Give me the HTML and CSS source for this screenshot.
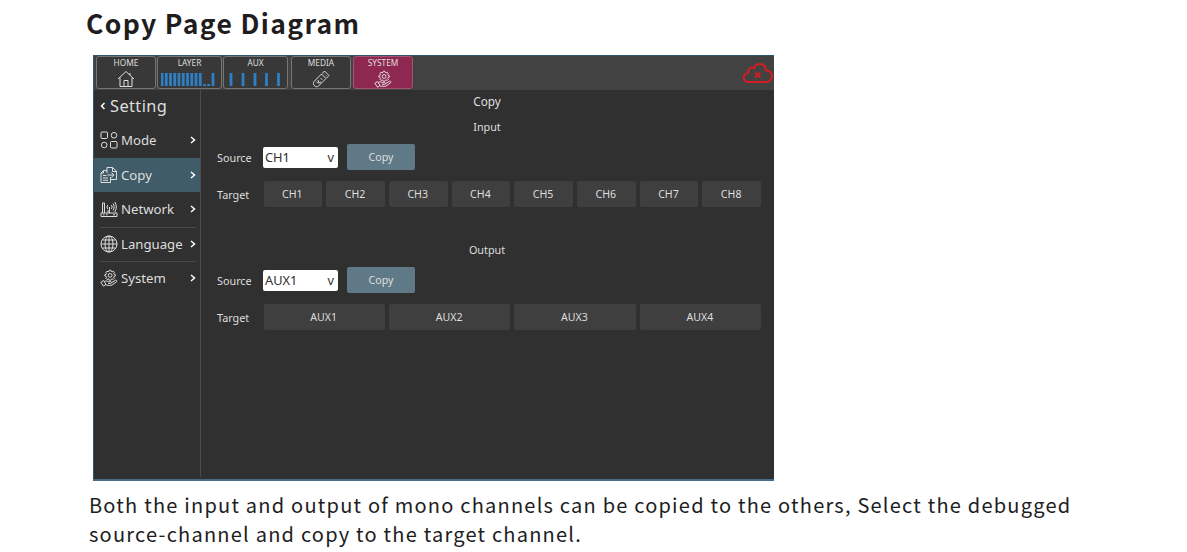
FILE: index.html
```html
<!DOCTYPE html>
<html lang="en">
  <head>
    <meta charset="UTF-8" />
    <meta name="viewport" content="width=device-width, initial-scale=1.0" />
    <title>Copy Page Diagram</title>
    <link rel="stylesheet" href="styles.css">
  </head>
  <body>
    <!-- shared icon -->
    <svg class="defs" width="0" height="0">
      <symbol id="gear-hand" viewBox="0 0 18 18">
        <path d="M9.300 1.200h1.600l.3 1.200 1 .4 1-.6 1.100 1.100-.6 1 .4 1 1.200.3v1.500l-1.200.3-.4 1 .6 1-1.100 1.100-1-.6-1 .4-.3 1H9.300L9 10.300l-1-.4-1 .6-1.100-1.100.6-1-.4-1-1.200-.3V5.600l1.200-.3.4-1-.6-1L7 2.200l1 .6 1-.4z" />
        <circle cx="10.100" cy="6.400" r="1.900" />
        <path d="M.8 13.300l2.700-1.800 2.500 3.800-2.500 1.900zM4.200 12.500c1.300-.8 2.800-.7 4 .2h2.600c1.100.1 1.100 1.500 0 1.700H8M11.700 13.600l3.700-2.300c1.300-.5 2 .7 1.100 1.500l-4.400 3.200c-1.600.8-4 .3-6.200 0" />
      </symbol>
    </svg>

    <h1>Copy Page Diagram</h1>

    <div class="app">
      <header class="topbar">
        <div class="tab home">
          <span>HOME</span>
          <svg class="tab-icon" width="18" height="18" viewBox="0 0 18 18"><path d="M1 9l8-7.500L17 9M3 7.500V16.500h12V7.500M7 16.500v-6h4v6M13 3v2" /></svg>
        </div>
        <div class="tab layer">
          <span>LAYER</span>
          <svg class="bars" width="58" height="13" viewBox="0 0 58 13">
            <path d="M1 0v13M5.250 0v13M9.500 0v13M13.750 0v13M18 0v13M22.250 0v13M26.500 0v13M30.750 0v13M35 0v13M39.250 0v13M43.500 11v2M47.700 11v2M52 0v13" />
          </svg>
        </div>
        <div class="tab aux">
          <span>AUX</span>
          <svg class="bars" width="58" height="13" viewBox="0 0 58 13">
            <path d="M4 0v13M16 0v13M28 0v13M39.500 0v13M51.500 0v13" />
          </svg>
        </div>
        <div class="tab media">
          <span>MEDIA</span>
          <svg class="tab-icon" width="18" height="18" viewBox="0 0 18 18"><path d="M2 11.500l7.500-7.500 4.500 4.500-7.500 7.500c-1.500 1.300-3 .8-4-.2-1.200-1.200-1.600-3-.5-4.300zM10 3.500l2.500-2.500L17 5.500 14.500 8M12.300 3.600l.5.5M14 5.300l.5.5M4.300 11.600l1.800 1.800M6 10l1 3 2-1M8.500 8l1.800 1.800" /></svg>
        </div>
        <div class="tab system active">
          <span>SYSTEM</span>
          <svg class="tab-icon" width="18" height="18"><use href="#gear-hand" /></svg>
        </div>
        <svg class="cloud" width="31" height="22" viewBox="0 0 31 22">
          <path d="M7 20C.8 20-.5 12.500 6 11c-.3-4.500 3.500-6.500 6.300-5C14.500.5 23 .3 24.200 8.500c5.500.5 7.500 5.500 4.500 9.500-1.200 1.700-2.700 2-4.700 2z" />
          <path class="cross" d="M13.200 10.500l5 5M18.200 10.500l-5 5" />
        </svg>
      </header>

      <div class="body">
        <nav class="sidebar">
          <div class="title">
            <svg width="6" height="8" viewBox="0 0 6 8"><path d="M4.500 1L1.500 4l3 3" /></svg>
            <span>Setting</span>
          </div>
          <div class="item">
            <svg class="icon" width="18" height="18" viewBox="0 0 18 18"><rect x="1" y="1" width="6.500" height="6.500" rx="1" /><circle cx="14" cy="4.300" r="2.800" /><circle cx="4.200" cy="14" r="2.800" /><rect x="10.500" y="10.500" width="6.500" height="6.500" rx="1" /></svg>
            <span>Mode</span>
            <svg class="arrow" width="6" height="8" viewBox="0 0 6 8"><path d="M1 1l3.500 3L1 7" /></svg>
          </div>
          <div class="item active">
            <svg class="icon" width="18" height="18" viewBox="0 0 18 18"><path d="M7 4.500H3.500L1 7v9.500h9.500v-3M7 7V1.500h5.500L16.500 5v8.500H10.500V11M12.500 1.500V5.500h4M1 7h2.500V4.500M3 9.500h3.500M3 12h5M3 14.300h5M7.500 9h6M11.500 6.800L14 9l-2.500 2.200" /></svg>
            <span>Copy</span>
            <svg class="arrow" width="6" height="8" viewBox="0 0 6 8"><path d="M1 1l3.500 3L1 7" /></svg>
          </div>
          <div class="item">
            <svg class="icon" width="18" height="18" viewBox="0 0 18 18"><path d="M1 13h16v3.500H1zM3 14.800h1.500M6 14.800h1.500M13 14.800h2M2.500 3v10M4.500 3v10M2.500 3h2M9.500 13V7M8 13v-3M11.300 5c1 1.200 1 2.800 0 4M13 3.500c1.500 2.200 1.500 4.800 0 7M14.800 2c2 3 2 7 0 10M7.800 5c-1 1.200-1 2.800 0 4" /></svg>
            <span>Network</span>
            <svg class="arrow" width="6" height="8" viewBox="0 0 6 8"><path d="M1 1l3.500 3L1 7" /></svg>
          </div>
          <div class="item">
            <svg class="icon" width="18" height="18" viewBox="0 0 18 18"><circle cx="9" cy="9" r="8" /><ellipse cx="9" cy="9" rx="4" ry="8" /><path d="M9 1v16M1 9h16M2.500 5h13M2.500 13h13" /></svg>
            <span>Language</span>
            <svg class="arrow" width="6" height="8" viewBox="0 0 6 8"><path d="M1 1l3.500 3L1 7" /></svg>
          </div>
          <div class="item">
            <svg class="icon" width="18" height="18"><use href="#gear-hand" /></svg>
            <span>System</span>
            <svg class="arrow" width="6" height="8" viewBox="0 0 6 8"><path d="M1 1l3.500 3L1 7" /></svg>
          </div>
        </nav>

        <main class="content">
          <h2>Copy</h2>
          <section class="group">
            <h3>Input</h3>
            <div class="row source">
              <span class="label">Source</span>
              <div class="select"><span>CH1</span><span>v</span></div>
              <button class="copy-btn">Copy</button>
            </div>
            <div class="row">
              <span class="label">Target</span>
              <div class="targets">
                <button>CH1</button>
                <button>CH2</button>
                <button>CH3</button>
                <button>CH4</button>
                <button>CH5</button>
                <button>CH6</button>
                <button>CH7</button>
                <button>CH8</button>
              </div>
            </div>
          </section>
          <section class="group">
            <h3>Output</h3>
            <div class="row source">
              <span class="label">Source</span>
              <div class="select"><span>AUX1</span><span>v</span></div>
              <button class="copy-btn">Copy</button>
            </div>
            <div class="row">
              <span class="label">Target</span>
              <div class="targets">
                <button>AUX1</button>
                <button>AUX2</button>
                <button>AUX3</button>
                <button>AUX4</button>
              </div>
            </div>
          </section>
        </main>
      </div>
    </div>

    <p class="desc">
      <span class="line">Both the input and output of mono channels can be copied to the others, Select the debugged</span>
      <span class="line">source-channel and copy to the target channel.</span>
    </p>
  </body>
</html>
```
FILE: styles.css
```css
:root {
  --bg-color: #303030;
  --bar-color: #424242;
  --btn-color: #3f3f3f;
  --active-color: #405c68;
  --copy-color: #607987;
  --pink-color: #8e2850;
  --blue-color: #2e7fc4;
  --text-color: #dedede;
  --doc-color: #211d1e;
}
* {
  margin: 0;
  padding: 0;
  box-sizing: border-box;
}
body {
  height: 552px;
  overflow: hidden;
  background-color: #fff;
  font-family: "Noto Sans", sans-serif;
  color: var(--doc-color);
}
svg {
  display: block;
  flex: none;
  fill: none;
  stroke: var(--text-color);
}
.defs {
  position: absolute;
}
h1 {
  height: 55px;
  padding: 3px 0 0 86px;
  font-family: "Noto Sans CJK SC", sans-serif;
  font-size: 26.5px;
  line-height: 40px;
  letter-spacing: 1.35px;
  white-space: nowrap;
}
.app {
  width: 681px;
  height: 426px;
  margin-left: 93px;
  background-color: var(--bg-color);
  border: 1px solid #31566b;
  border-right: 0;
  border-bottom: 2px solid #496c84;
  color: var(--text-color);
}
/* top bar */
.topbar {
  display: flex;
  height: 34px;
  padding-left: 2px;
  background-color: var(--bar-color);
}
.tab {
  display: flex;
  flex-direction: column;
  align-items: center;
  width: 60px;
  height: 33px;
  margin-right: 1px;
  border: 1px solid #757575;
  border-radius: 3px;
  background-color: #383838;
}
.tab span {
  height: 14px;
  font-size: 8.3px;
  line-height: 12px;
}
.tab.layer,
.tab.aux {
  width: 65px;
}
.tab.aux {
  margin-right: 3px;
}
.tab.media {
  margin-right: 2px;
}
.tab.system {
  background-color: var(--pink-color);
  border-color: #a35472;
}
.tab-icon {
  stroke-width: 1;
}
.bars {
  margin-top: 2px;
  stroke: var(--blue-color);
  stroke-width: 2.8;
}
.cloud {
  margin: 6px 1px 0 auto;
  stroke: #d41c22;
  stroke-width: 2;
}
.body {
  display: flex;
  height: 389px;
}
/* sidebar */
.sidebar {
  width: 107px;
  height: 387px;
  border-right: 1px solid #4a4a4a;
}
.title {
  display: flex;
  align-items: center;
  gap: 4px;
  height: 33px;
  padding: 0 0 2px 6px;
  font-size: 16.4px;
  letter-spacing: 0.4px;
}
.title svg,
.arrow {
  stroke: #fff;
  stroke-width: 1.5;
}
.item {
  display: flex;
  align-items: center;
  height: 34.5px;
  padding: 0 4px 0 6px;
  font-size: 13.2px;
}
.item span {
  margin-left: 3px;
}
.item.active {
  background-color: var(--active-color);
}
.item:nth-child(n + 5) {
  background: linear-gradient(#484848, #484848) 6px 0 / 96px 1px no-repeat;
}
.icon {
  stroke-width: 1;
}
.arrow {
  margin-left: auto;
}
/* content */
.content {
  flex: 1;
  padding: 0 13px 0 15px;
}
h2,
h3 {
  padding-right: 3px;
  font-weight: 400;
  text-align: center;
}
h2 {
  height: 25px;
  font-size: 11.8px;
  line-height: 23px;
}
h3 {
  height: 26px;
  font-size: 10.8px;
  line-height: 24px;
}
.group {
  height: 123px;
}
.row {
  display: flex;
  align-items: center;
  height: 26px;
}
.row.source {
  margin: 3px 0 11px;
}
.label {
  width: 47.5px;
  padding-left: 1px;
  font-size: 10.8px;
}
.select {
  display: flex;
  align-items: center;
  justify-content: space-between;
  width: 75px;
  height: 21px;
  margin: 0 9px 0 -0.5px;
  padding: 0 4px 0 2px;
  border-radius: 2px;
  background-color: #fff;
  color: #303030;
  font-size: 12.8px;
}
button {
  border: none;
  border-radius: 2px;
  background-color: var(--btn-color);
  color: var(--text-color);
  font-family: inherit;
  font-size: 10.6px;
}
.copy-btn {
  width: 68px;
  height: 26px;
  background-color: var(--copy-color);
}
.targets {
  display: flex;
  flex: 1;
  gap: 4px;
}
.targets button {
  flex: 1;
  height: 26px;
  padding: 0 1px 1px 0;
}
/* description */
.desc {
  padding: 9px 0 0 89px;
  font-family: "Noto Sans CJK SC", sans-serif;
  font-size: 20px;
  line-height: 29px;
}
.line {
  display: block;
  white-space: nowrap;
  letter-spacing: 1.22px;
}
```
